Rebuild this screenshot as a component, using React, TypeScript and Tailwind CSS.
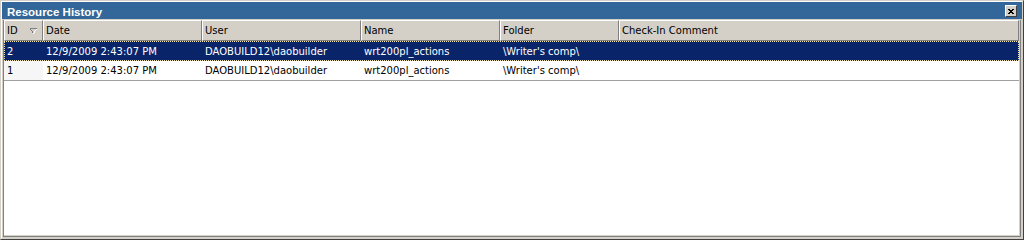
import React from "react";

function SortArrow() {
  return (
    <svg width="7" height="6" viewBox="0 0 7 6" shapeRendering="crispEdges" className="ml-auto mr-[5px]">
      <rect x="0" y="0" width="7" height="1" fill="#808080" />
      <rect x="0" y="1" width="1" height="1" fill="#808080" />
      <rect x="1" y="2" width="1" height="1" fill="#808080" />
      <rect x="2" y="3" width="1" height="1" fill="#808080" />
      <rect x="2" y="4" width="1" height="1" fill="#808080" />
      <rect x="3" y="5" width="1" height="1" fill="#ffffff" />
      <rect x="6" y="1" width="1" height="1" fill="#ffffff" />
      <rect x="5" y="2" width="1" height="1" fill="#ffffff" />
      <rect x="4" y="3" width="1" height="1" fill="#ffffff" />
      <rect x="4" y="4" width="1" height="1" fill="#ffffff" />
    </svg>
  );
}

function CloseGlyph() {
  return (
    <svg width="6" height="5" viewBox="0 0 6 5" shapeRendering="crispEdges">
      <rect x="0" y="0" width="2" height="1" fill="#000" />
      <rect x="4" y="0" width="2" height="1" fill="#000" />
      <rect x="1" y="1" width="4" height="1" fill="#000" />
      <rect x="2" y="2" width="2" height="1" fill="#000" />
      <rect x="1" y="3" width="4" height="1" fill="#000" />
      <rect x="0" y="4" width="2" height="1" fill="#000" />
      <rect x="4" y="4" width="2" height="1" fill="#000" />
    </svg>
  );
}

const headCell =
  "h-full flex items-center pl-[2px] border-t border-l border-r border-b border-t-white border-l-white border-r-[#808080] border-b-[#808080] whitespace-nowrap overflow-hidden";

const rows = [
  { id: "2", date: "12/9/2009 2:43:07 PM", user: "DAOBUILD12\\daobuilder", name: "wrt200pl_actions", folder: "\\Writer's comp\\", selected: true },
  { id: "1", date: "12/9/2009 2:43:07 PM", user: "DAOBUILD12\\daobuilder", name: "wrt200pl_actions", folder: "\\Writer's comp\\", selected: false },
];

export default function App() {
  return (
    <div className="w-[1024px] h-[240px] bg-[#d4d0c8] border border-t-[#d4d0c8] border-l-[#d4d0c8] border-r-[#404040] border-b-[#404040] font-['DejaVu_Sans',Verdana,sans-serif] text-[10px] text-black">
      <div className="h-full flex flex-col border border-t-white border-l-white border-r-[#d4d0c8] border-b-[#d4d0c8]">
        {/* Title bar */}
        <div className="h-[17px] shrink-0 bg-[#336699] flex items-start justify-between pl-[5px] pr-[5px]">
          <span className="pt-[4px] leading-[13px] font-bold text-white whitespace-nowrap font-['Liberation_Sans',Arial,sans-serif] text-[11.5px]">Resource History</span>
          <div className="mt-[3px] w-[12px] h-[12px] bg-[#d4d0c8] border border-t-white border-l-white border-r-[#404040] border-b-[#404040] flex items-center justify-center">
            <CloseGlyph />
          </div>
        </div>
        {/* List */}
        <div className="mt-[1px] mx-[1px] mb-[1px] flex-1 flex flex-col border-l border-r border-b border-[#808080] bg-[#d4d0c8] pr-[1px] pb-[1px]">
          <div className="flex-1 bg-white flex flex-col">
            <div className="h-[21px] flex bg-[#d4d0c8] shrink-0">
              <div className={`${headCell} w-[39px]`}>
                <span>ID</span>
                <SortArrow />
              </div>
              <div className={`${headCell} w-[159px]`}>Date</div>
              <div className={`${headCell} w-[159px]`}>User</div>
              <div className={`${headCell} w-[139px]`}>Name</div>
              <div className={`${headCell} w-[119px]`}>Folder</div>
              <div className={`${headCell} w-[400px]`}>Check-In Comment</div>
            </div>
            {rows.map((r) => (
              <div
                key={r.id}
                className={
                  r.selected
                    ? "relative h-[20px] flex items-center bg-[#0a246a] text-white whitespace-nowrap"
                    : "relative h-[20px] flex items-center bg-white text-black border-b border-[#a0a0a0] whitespace-nowrap"
                }
              >
                <div className={r.selected ? "w-[39px] h-full flex items-center pl-[3px]" : "w-[39px] h-full flex items-center pl-[3px] bg-[#f6f6f6]"}>{r.id}</div>
                <div className="w-[159px] pl-[3px]">{r.date}</div>
                <div className="w-[159px] pl-[3px]">{r.user}</div>
                <div className="w-[139px] pl-[3px]">{r.name}</div>
                <div className="w-[119px] pl-[3px]">{r.folder}</div>
                <div className="w-[400px] pl-[3px]"></div>
                {r.selected && (
                  <div className="absolute inset-0 border border-dotted border-[#f3e7b4] pointer-events-none" />
                )}
              </div>
            ))}
          </div>
        </div>
      </div>
    </div>
  );
}
